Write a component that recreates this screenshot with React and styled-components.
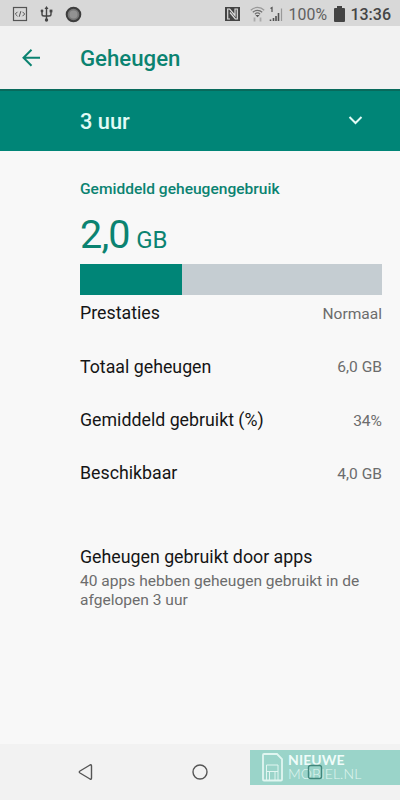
import React from "react";
import styled, { createGlobalStyle } from "styled-components";

const GlobalStyle = createGlobalStyle`
  * {
    box-sizing: border-box;
  }

  body {
    margin: 0;
    background: #f8f8f8;
    font-family: Roboto, "Liberation Sans", sans-serif;
  }
`;

const Screen = styled.div`
  position: relative;
  display: flex;
  flex-direction: column;
  width: 400px;
  height: 800px;
  overflow: hidden;
  background: #f8f8f8;
`;

const StatusBar = styled.div`
  display: flex;
  align-items: center;
  justify-content: space-between;
  height: 26px;
  padding: 2px 9px 0 12px;
  background: #d8d8d8;
  color: #454545;
`;

const StatusGroup = styled.div`
  display: flex;
  align-items: center;
  gap: ${(props) => props.$gap};

  svg {
    display: block;
  }
`;

const Percent = styled.span`
  margin-right: 2px;
  color: #606060;
  font-size: 15.8px;
  letter-spacing: 0.2px;
`;

const Clock = styled.span`
  font-size: 16px;
  font-weight: 500;
`;

const AppBar = styled.header`
  display: flex;
  align-items: center;
  height: 63px;
  padding: 1px 20px 0;
  background: #f2f2f2;
  color: #0b8371;
`;

const BackButton = styled.button`
  width: 60px;
  height: 24px;
  padding: 0;
  border: none;
  background: none;
  color: inherit;
  text-align: left;
`;

const Title = styled.h1`
  margin: 0;
  font-size: 22.2px;
  font-weight: 500;
`;

const Period = styled.div`
  display: flex;
  align-items: center;
  justify-content: space-between;
  height: 62px;
  padding: 0 34px 0 80px;
  border-top: 2px solid #096a5c;
  background: #008577;
  color: #e2fbf6;
  font-size: 21.8px;
  font-weight: 500;
`;

const Content = styled.main`
  flex: 1;
  padding: 28px 18px 0 80px;
`;

const Category = styled.h2`
  margin: 0;
  color: #0b8371;
  font-size: 15.56px;
  font-weight: 500;
  line-height: 20px;
`;

const Amount = styled.div`
  height: 65px;
  padding-top: 12px;
  color: #0b8371;
  font-size: 39.5px;
  letter-spacing: -0.8px;
  line-height: 47px;
`;

const Unit = styled.span`
  margin-left: 6.5px;
  font-size: 24px;
  letter-spacing: -0.2px;
`;

const Meter = styled.div`
  height: 31px;
  background: #c5cdd2;
`;

const MeterFill = styled.div`
  width: ${(props) => props.$percent}%;
  height: 100%;
  background: #008577;
`;

const Rows = styled.div`
  margin-top: -8.2px;
`;

const Row = styled.div`
  display: flex;
  align-items: center;
  justify-content: space-between;
  height: 53.33px;
`;

const Label = styled.div`
  color: #151515;
  font-size: 17.78px;
  line-height: 22px;
`;

const Value = styled.span`
  padding-top: 1px;
  color: #6c6c6c;
  font-size: 15.56px;
`;

const AppUsage = styled.div`
  margin-top: 46.2px;
`;

const Summary = styled.p`
  margin: 4px 0 0;
  color: #6c6c6c;
  font-size: 15.56px;
  line-height: 18.5px;
`;

const NavBar = styled.nav`
  display: grid;
  grid-template-columns: repeat(3, 114px);
  justify-content: center;
  justify-items: center;
  align-items: center;
  height: 56px;
  background: #f2f2f2;
`;

const Watermark = styled.div`
  position: absolute;
  top: 750px;
  right: 0;
  display: flex;
  gap: 5px;
  width: 150px;
  height: 35px;
  padding: 3px 0 0 12px;
  background: #9ad4c9;
  color: #e1f6f1;
`;

const Brand = styled.div`
  font-family: Lato, sans-serif;
  font-size: 14px;
  line-height: 14px;
`;

const BrandTop = styled.div`
  color: #effcf9;
  font-weight: 700;
  letter-spacing: 0.1px;
`;

const BrandBottom = styled.div`
  font-weight: 300;
  letter-spacing: 0.1px;
`;

const RecentsMark = styled.svg`
  position: absolute;
  top: 764px;
  left: 307px;
  width: 16px;
  height: 16px;
`;

const rows = [
  { label: "Prestaties", value: "Normaal" },
  { label: "Totaal geheugen", value: "6,0 GB" },
  { label: "Gemiddeld gebruikt (%)", value: "34%" },
  { label: "Beschikbaar", value: "4,0 GB" },
];

const CodeIcon = () => (
  <svg width="16" height="16" viewBox="0 0 16 16" fill="none" stroke="#555">
    <rect x="1.5" y="1.5" width="13" height="13" strokeWidth="1.2" />
    <path d="M5.5 5.8L3.3 8l2.2 2.2M10.5 5.8L12.7 8l-2.2 2.2M8.8 5.2L7.2 10.8" />
  </svg>
);

const UsbIcon = () => (
  <svg width="13" height="16" viewBox="0 0 13 16" fill="none" stroke="#454545" strokeWidth="1.4">
    <path d="M6.5 2v12M2 5v3.2C2 9.5 3 10 4 10h5c1 0 2-.5 2-1.8V5" />
    <path d="M6.5 0l2 3h-4z" fill="#454545" stroke="none" />
    <circle cx="2" cy="5" r="1.4" fill="#454545" stroke="none" />
    <path d="M9.6 3.6h2.8v2.8H9.6z" fill="#454545" stroke="none" />
    <circle cx="6.5" cy="14" r="1.7" fill="#454545" stroke="none" />
  </svg>
);

const RecordIcon = () => (
  <svg width="17" height="17" viewBox="0 0 17 17">
    <circle cx="8.5" cy="8.5" r="6.8" fill="#777" stroke="#3d3d3d" strokeWidth="2" />
    <circle cx="8.5" cy="8.5" r="4" fill="#929292" />
  </svg>
);

const NfcIcon = () => (
  <svg width="15" height="16" viewBox="0 0 15 16">
    <path d="M0 1h15v14H0z" fill="#444" />
    <path d="M5 13H2.7V3h2L10 9.5V3h2.300v10h-2L5 6.500" fill="none" stroke="#dcdcdc" strokeWidth="1.2" />
  </svg>
);

const WifiIcon = () => (
  <svg width="15" height="16" viewBox="0 0 15 16" fill="none" stroke="#707070" strokeWidth="1.2">
    <path d="M.8 4.2a9.5 9.5 0 0 1 13.4 0" stroke="#999" />
    <path d="M2.8 6.3a6.7 6.7 0 0 1 9.4 0M4.9 8.2a3.8 3.8 0 0 1 5.2 0" />
    <path d="M5.5 9h4l-2 2.2z" fill="#555" stroke="none" />
    <path d="M4.5 15.5v-4M10.5 11.5v4" stroke="#aaa" strokeWidth="1.8" />
  </svg>
);

const SignalIcon = () => (
  <svg width="14" height="16" viewBox="0 0 14 16" fill="none" stroke="#505050">
    <path d="M1.5 2.5L3 1.5V6" strokeWidth="1.2" />
    <path d="M1.5 15v-1.5M4.5 15v-3M7 15v-5M9.5 15V7" strokeWidth="1.6" />
    <path d="M12.5 15V2.5" stroke="#999" strokeWidth="1.2" />
  </svg>
);

const BatteryIcon = () => (
  <svg width="11" height="16" viewBox="0 0 11 16" fill="#444">
    <path d="M3 0h5v2h2q1 0 1 1v12q0 1-1 1H1q-1 0-1-1V3q0-1 1-1h2z" />
  </svg>
);

const SimIcon = () => (
  <svg width="21" height="29" viewBox="0 0 21 29" fill="none" stroke="#e1f6f1">
    <path d="M1 2q0-1 1-1h13l5 5v20.5q0 1-1 1H2q-1 0-1-1z" strokeWidth="1.8" />
    <path d="M4.5 27V12H16v15M4.500 18.500H16M7.500 27v-8.500M13 27v-8.500" />
  </svg>
);

const App = () => {
  return (
    <Screen>
      <GlobalStyle />
      <StatusBar>
        <StatusGroup $gap="12px">
          <CodeIcon />
          <UsbIcon />
          <RecordIcon />
        </StatusGroup>
        <StatusGroup $gap="5px">
          <StatusGroup $gap="10px">
            <NfcIcon />
            <StatusGroup $gap="4px">
              <WifiIcon />
              <SignalIcon />
            </StatusGroup>
          </StatusGroup>
          <Percent>100%</Percent>
          <BatteryIcon />
          <Clock>13:36</Clock>
        </StatusGroup>
      </StatusBar>

      <AppBar>
        <BackButton aria-label="Terug">
          <svg width="22" height="22" viewBox="0 0 22 22" fill="none" stroke="currentColor" strokeWidth="2">
            <path d="M20 11.7H4M11.5 3.7l-8 8 8 8" />
          </svg>
        </BackButton>
        <Title>Geheugen</Title>
      </AppBar>

      <Period>
        <span>3 uur</span>
        <svg width="22" height="22" viewBox="0 0 22 22" fill="none" stroke="currentColor" strokeWidth="2">
          <path d="M5.500 7l6 6 6-6" />
        </svg>
      </Period>

      <Content>
        <Category>Gemiddeld geheugengebruik</Category>
        <Amount>
          2,0
          <Unit>GB</Unit>
        </Amount>
        <Meter>
          <MeterFill $percent={33.8} />
        </Meter>
        <Rows>
          {rows.map((row) => (
            <Row key={row.label}>
              <Label>{row.label}</Label>
              <Value>{row.value}</Value>
            </Row>
          ))}
        </Rows>
        <AppUsage>
          <Label>Geheugen gebruikt door apps</Label>
          <Summary>40 apps hebben geheugen gebruikt in de afgelopen 3 uur</Summary>
        </AppUsage>
      </Content>

      <NavBar>
        <svg width="18" height="18" viewBox="0 0 18 18" fill="none" stroke="#555" strokeWidth="1.4">
          <path d="M13 2L3 8q-1.5 1 0 2l10 6q1.5.7 1.5-1V3q0-1.700-1.500-1z" />
        </svg>
        <svg width="18" height="18" viewBox="0 0 18 18" fill="none" stroke="#555" strokeWidth="1.4">
          <circle cx="9" cy="9" r="7" />
        </svg>
      </NavBar>

      <Watermark>
        <SimIcon />
        <Brand>
          <BrandTop>NIEUWE</BrandTop>
          <BrandBottom>MOBIEL.NL</BrandBottom>
        </Brand>
      </Watermark>
      <RecentsMark viewBox="0 0 16 16" fill="none" stroke="#41877c" strokeWidth="1.4">
        <rect x="1.5" y="1.5" width="13" height="13" rx="2" />
      </RecentsMark>
    </Screen>
  );
};

export default App;
